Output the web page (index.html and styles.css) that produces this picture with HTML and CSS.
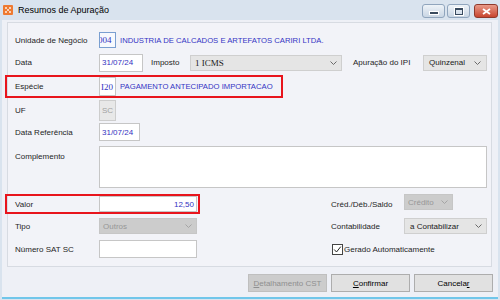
FILE: index.html
```html
<!DOCTYPE html>
<html lang="pt-BR">
<head>
    <meta charset="UTF-8">
    <title>Resumos de Apuração</title>
    <link rel="stylesheet" href="styles.css">
</head>
<body>
    <div class="window">
        <!-- Title bar -->
        <div class="titlebar">
            <svg class="app-icon" viewBox="0 0 10 10">
                <rect width="10" height="10" rx="1" fill="#ee7a32"/>
                <path d="M2 2h2v2H2zM6 2h2v2H6zM4 4h2v2H4zM2 6h2v2H2zM6 6h2v2H6z" fill="#fbd2b4"/>
            </svg>
            <span class="title">Resumos de Apuração</span>
            <div class="controls">
                <span class="ctl"><i class="glyph-min"></i></span>
                <span class="ctl"><i class="glyph-max"></i></span>
                <span class="ctl ctl-close">
                    <svg viewBox="0 0 9 7" width="9" height="7">
                        <path d="M1 1l7 5M8 1L1 6" stroke="#fff" stroke-width="1.8"/>
                    </svg>
                </span>
            </div>
        </div>

        <div class="client">
            <div class="panel">
                <div class="row r1">
                    <span class="lbl">Unidade de Negócio</span>
                    <span class="box code focus"><span class="scrolled">004</span></span>
                    <span class="desc">INDUSTRIA DE CALCADOS E ARTEFATOS CARIRI LTDA.</span>
                </div>

                <div class="row r2">
                    <span class="lbl">Data</span>
                    <span class="box date">31/07/24</span>
                    <span class="lbl l-imposto">Imposto</span>
                    <span class="combo c-imposto"><span class="serif">1 ICMS</span>
                        <svg class="chev" viewBox="0 0 7 4"><polyline points="0.5,0.5 3.5,3.5 6.5,0.5"/></svg>
                    </span>
                    <span class="lbl l-ipi">Apuração do IPI</span>
                    <span class="combo c-ipi">Quinzenal
                        <svg class="chev" viewBox="0 0 7 4"><polyline points="0.5,0.5 3.5,3.5 6.5,0.5"/></svg>
                    </span>
                </div>

                <div class="row r3">
                    <span class="mark mark-especie"></span>
                    <span class="lbl">Espécie</span>
                    <span class="box code serif">I20</span>
                    <span class="desc">PAGAMENTO ANTECIPADO IMPORTACAO</span>
                </div>

                <div class="row r4">
                    <span class="lbl">UF</span>
                    <span class="box uf">SC</span>
                </div>

                <div class="row r5">
                    <span class="lbl">Data Referência</span>
                    <span class="box date-ref">31/07/24</span>
                </div>

                <div class="row r6">
                    <span class="lbl">Complemento</span>
                    <span class="box memo"></span>
                </div>

                <div class="lower">
                    <span class="mark mark-valor"></span>
                    <span class="lbl a-valor">Valor</span>
                    <span class="box valor">12,50</span>
                    <span class="lbl a-cred">Créd./Déb./Saldo</span>
                    <span class="combo off c-cred">Crédito
                        <svg class="chev" viewBox="0 0 7 4"><polyline points="0.5,0.5 3.5,3.5 6.5,0.5"/></svg>
                    </span>

                    <span class="lbl a-tipo">Tipo</span>
                    <span class="combo off c-tipo">Outros
                        <svg class="chev" viewBox="0 0 7 4"><polyline points="0.5,0.5 3.5,3.5 6.5,0.5"/></svg>
                    </span>
                    <span class="lbl a-contab">Contabilidade</span>
                    <span class="combo c-contab">a Contabilizar
                        <svg class="chev" viewBox="0 0 7 4"><polyline points="0.5,0.5 3.5,3.5 6.5,0.5"/></svg>
                    </span>

                    <span class="lbl a-sat">Número SAT SC</span>
                    <span class="box sat"></span>
                    <span class="check">
                        <svg viewBox="0 0 11 11" width="11" height="11">
                            <rect x="0.5" y="0.5" width="10" height="10" fill="#fff" stroke="#444"/>
                            <polyline points="2.2,5.5 4.5,8 8.8,2.6" fill="none" stroke="#222" stroke-width="1"/>
                        </svg>
                        Gerado Automaticamente
                    </span>
                </div>
            </div>

            <!-- Dialog buttons -->
            <div class="buttons">
                <span class="btn disabled"><u>D</u>etalhamento CST</span>
                <span class="btn"><u>C</u>onfirmar</span>
                <span class="btn">Cancela<u>r</u></span>
            </div>
        </div>
    </div>
</body>
</html>
```

FILE: styles.css
```css
/* General */
body {
    margin: 0;
    font-family: "Liberation Sans", Arial, sans-serif;
    font-size: 8px;
    color: #1e1e1e;
}

.serif {
    font-family: "Liberation Serif", "Times New Roman", serif;
    font-size: 9px;
}

/* Window frame */
.window {
    width: 500px;
    height: 300px;
    box-sizing: border-box;
    padding-bottom: 1px;
    background-color: #d9e3ee;
    display: flex;
    flex-direction: column;
    overflow: hidden;
}

.titlebar {
    height: 20px;
    flex: none;
    display: flex;
    align-items: center;
    padding-left: 3px;
}

.app-icon {
    width: 10px;
    height: 10px;
    margin-right: 5px;
}

.title {
    font-size: 9px;
    color: #000;
}

.controls {
    margin-left: auto;
    align-self: flex-start;
    margin-top: 4px;
    padding-right: 2px;
    display: flex;
    gap: 2px;
}

.ctl {
    width: 23px;
    height: 14px;
    box-sizing: border-box;
    border: 1px solid #90a5bd;
    border-radius: 3px;
    background: linear-gradient(#eef3f8, #c9d6e4);
    display: flex;
    align-items: center;
    justify-content: center;
}

.ctl-close {
    width: 24px;
    margin-left: 2px;
    border-color: #8f3a2c;
    background: linear-gradient(#e99a88, #c8452f);
}

.glyph-min {
    width: 8px;
    height: 2px;
    margin-top: 3px;
    background: #394b5f;
    border: 1px solid #fff;
}

.glyph-max {
    width: 6px;
    height: 4px;
    border: 1px solid #394b5f;
    border-top-width: 2px;
    outline: 1px solid #fff;
}

/* Client area */
.client {
    flex: 1;
    margin: 0 2px;
    background-color: #eef0f6;
    border-bottom: 2px solid #70c6ea;
}

.panel {
    width: 485px;
    height: 245px;
    box-sizing: border-box;
    margin: 2px 0 0 5px;
    padding: 8px 4px 0 7px;
    border: 1px solid #d7dbe2;
    background-color: #f2f3f8;
}

/* Rows */
.row {
    display: flex;
    align-items: center;
}

.lbl {
    flex: none;
    width: 84px;
    white-space: nowrap;
}

.r1 { height: 18px; }
.r2 { height: 19px; margin-top: 4px; }
.r3 { height: 23px; margin-top: 3px; }
.r4 { height: 22px; margin-top: 1px; }
.r5 { height: 20px; margin-top: 1px; }
.r6 { height: 42px; margin-top: 4px; align-items: flex-start; }
.r6 .lbl { padding-top: 6px; }

/* Inputs */
.box {
    flex: none;
    box-sizing: border-box;
    display: flex;
    align-items: center;
    background: #fff;
    border: 1px solid #c6c6c6;
    color: #3232c2;
    white-space: nowrap;
    overflow: hidden;
}

.code {
    width: 17px;
    height: 16px;
    padding-left: 1px;
}

.focus {
    border-color: #7a9fd0;
    background: #f7f9fd;
}

.scrolled {
    margin-left: -3px;
    font-family: "Liberation Serif", "Times New Roman", serif;
    font-size: 9px;
}

.r3 .code {
    height: 19px;
}

.desc {
    margin-left: 4px;
    color: #3434c4;
    font-size: 7.7px;
    white-space: nowrap;
}

.date {
    width: 44px;
    height: 18px;
    padding-left: 2px;
}

.uf {
    width: 17px;
    height: 21px;
    padding-left: 2px;
    background: #e8e8e8;
    border-color: #cdcdcd;
    color: #a2a2a2;
}

.date-ref {
    width: 41px;
    height: 18px;
    padding-left: 2px;
}

.memo {
    width: 388px;
    height: 42px;
}

/* Combo boxes */
.combo {
    flex: none;
    height: 16px;
    box-sizing: border-box;
    display: flex;
    align-items: center;
    padding: 0 4px 0 5px;
    background: #e5e5e5;
    border: 1px solid #cfcfcf;
    color: #1a1a1a;
    white-space: nowrap;
}

.chev {
    width: 7px;
    height: 4px;
    margin-left: auto;
    fill: none;
    stroke: #6a6a6a;
}

.combo.off {
    background: #cccccc;
    border-color: #c6c6c6;
    color: #979797;
    padding-left: 3px;
}

.combo.off .chev {
    stroke: #a5a5a5;
}

.l-imposto { width: 39px; margin-left: 8px; }
.c-imposto { width: 152px; padding-left: 4px; }
.l-ipi { width: 70px; margin-left: 11px; }
.c-ipi { width: 64px; padding-right: 5px; }

/* Red highlight frames */
.mark {
    box-sizing: border-box;
    border: 2px solid #e8141c;
    justify-self: start;
    align-self: stretch;
    pointer-events: none;
}

.r3 {
    display: grid;
    grid-template-columns: 84px 17px 1fr;
    align-items: center;
}

.r3 > * { grid-row: 1; }
.r3 .lbl { grid-column: 1; }
.r3 .code { grid-column: 2; }
.r3 .desc { grid-column: 3; }

.mark-especie {
    grid-column: 1 / -1;
    width: 278px;
    margin-left: -10px;
}

/* Lower section */
.lower {
    margin-top: 6px;
    display: grid;
    grid-template-columns: 84px 98px 134px 73px 1fr;
    grid-template-rows: 20px 18px 22px;
    row-gap: 3px;
    align-items: center;
}

.mark-valor {
    grid-area: 1 / 1 / 2 / 3;
    width: 195px;
    margin-left: -10px;
}

.a-valor { grid-area: 1 / 1; }
.valor {
    grid-area: 1 / 2;
    height: 16px;
    justify-content: flex-end;
    padding-right: 2px;
}
.a-cred { grid-area: 1 / 4; }
.c-cred { grid-area: 1 / 5; width: 49px; align-self: start; }

.a-tipo { grid-area: 2 / 1; }
.c-tipo { grid-area: 2 / 2; }
.a-contab { grid-area: 2 / 4; }
.c-contab { grid-area: 2 / 5; }

.a-sat { grid-area: 3 / 1; }
.sat { grid-area: 3 / 2; height: 18px; }

.check {
    grid-area: 3 / 4 / 4 / 6;
    margin-left: 1px;
    display: flex;
    align-items: center;
    gap: 1px;
    white-space: nowrap;
}

/* Buttons */
.buttons {
    margin-top: 7px;
    padding-right: 5px;
    display: flex;
    justify-content: flex-end;
    gap: 4px;
}

.btn {
    width: 79px;
    height: 18px;
    box-sizing: border-box;
    display: flex;
    align-items: center;
    justify-content: center;
    background: #e1e1e1;
    border: 1px solid #adadad;
    color: #000;
}

.btn.disabled {
    background: #cccccc;
    border-color: #bfbfbf;
    color: #8f8f8f;
}
```
